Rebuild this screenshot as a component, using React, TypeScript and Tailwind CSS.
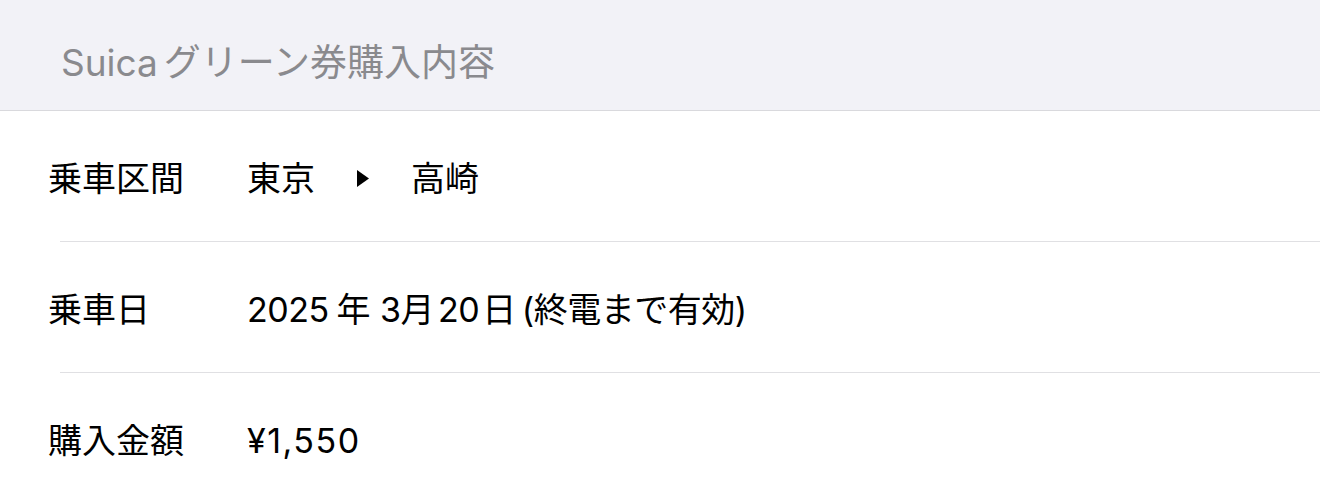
import React from 'react';

interface Row {
  label: string;
  value: React.ReactNode;
}

const font = "font-['Inter','Noto_Sans_CJK_JP',sans-serif]";

const App: React.FC = () => {
  const rows: Row[] = [
    {
      label: '乗車区間',
      value: (
        <span className="flex items-center">
          <span>東京</span>
          <svg width="12" height="17" viewBox="0 0 12 17" className="ml-[42px] mr-[42px]">
            <path d="M0 0 L12 8.5 L0 17 Z" fill="#000" />
          </svg>
          <span>高崎</span>
        </span>
      ),
    },
    {
      label: '乗車日',
      value: (
        <span className="tracking-[-0.5px]">
          2025<span className="ml-[8px]">年</span>
          <span className="ml-[10px]">3</span>月<span className="ml-[4px]">20</span>
          <span className="ml-[3px]">日</span>
          <span className="ml-[6px]">(終電まで有効)</span>
        </span>
      ),
    },
    { label: '購入金額', value: <span className="tracking-[1.5px]">¥1,550</span> },
  ];

  return (
    <div className={`h-[481px] w-[1320px] overflow-hidden bg-white ${font}`}>
      {/* Section header */}
      <div className="flex h-[111px] items-center border-b border-[#d9d9dd] bg-[#f2f2f7] pt-[16px] pl-[61px] text-[37px] text-[#8a8a8e]">
        Suica<span className="ml-[6px]">グリーン券購入内容</span>
      </div>

      {rows.map((row, i) => (
        <div key={row.label}>
          <div className="flex h-[130px] items-center pt-[4px] pl-[48px] text-[34px] text-black">
            <div className="w-[199px]">{row.label}</div>
            <div>{row.value}</div>
          </div>
          {i < rows.length - 1 && <div className="ml-[60px] h-px bg-[#e0e0e3]" />}
        </div>
      ))}
    </div>
  );
};

export default App;
